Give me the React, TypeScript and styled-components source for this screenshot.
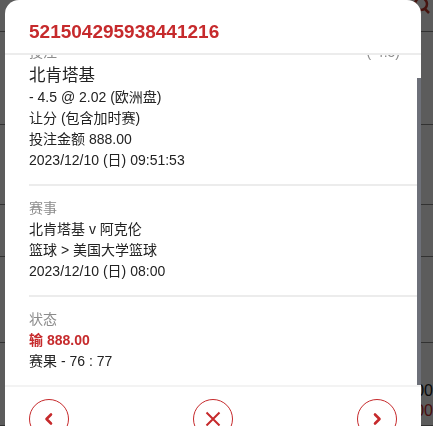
import React, { useLayoutEffect, useRef, useState } from 'react';
import styled, { createGlobalStyle } from 'styled-components';

const colors = {
  red: '#c62a2c',
  text: '#222222',
  label: '#8c8c8c',
  line: '#ececec',
  thumb: '#6d7079',
};

const GlobalStyle = createGlobalStyle`
  html, body {
    margin: 0;
    padding: 0;
    height: 100%;
    overflow: hidden;
    font-family: "Liberation Sans", Arial, "Noto Sans CJK SC", sans-serif;
  }
`;

/* page behind the dialog */
const Page = styled.div`
  width: 433px;
  height: 426px;
  background: #ffffff;
  display: flex;
  flex-direction: column;
`;

const PageBar = styled.div`
  height: 32px;
  display: flex;
  justify-content: flex-end;
  align-items: flex-start;
  padding-right: 2px;
  border-bottom: 1px solid #8a8a8a;
  box-sizing: border-box;
`;

const PageRow = styled.div<{ $h: number }>`
  height: ${({ $h }) => $h}px;
  border-bottom: 1px solid #8a8a8a;
  box-sizing: border-box;
  display: flex;
  flex-direction: column;
  align-items: flex-end;
  justify-content: flex-end;
  padding: 0 0 4px;
  font-size: 16px;
  line-height: 20px;
`;

const PageNum = styled.span<{ $red?: boolean }>`
  color: ${({ $red }) => ($red ? '#c62a2c' : '#222')};
`;

const Overlay = styled.div`
  position: fixed;
  inset: 0;
  background: rgba(0, 0, 0, 0.64);
  display: flex;
  align-items: flex-start;
  padding-left: 5px;
`;

const Modal = styled.div`
  width: 416px;
  background: #ffffff;
  border-radius: 14px 14px 0 0;
  display: flex;
  flex-direction: column;
  overflow: hidden;
  flex-shrink: 0;
  & > * {
    flex-shrink: 0;
  }
`;

const Header = styled.div`
  height: 55px;
  display: flex;
  align-items: center;
  padding: 10px 24px 0;
  box-sizing: border-box;
  border-bottom: 2px solid ${colors.line};
`;

const Title = styled.h2`
  margin: 0;
  font-size: 19px;
  font-weight: 700;
  color: ${colors.red};
`;

const BodyWrap = styled.div`
  position: relative;
  height: 330px;
`;

const Body = styled.div`
  height: 100%;
  overflow-y: auto;
  scrollbar-width: none;
  &::-webkit-scrollbar {
    display: none;
  }
`;

const Thumb = styled.div`
  position: absolute;
  right: 0;
  width: 4px;
  background: ${colors.thumb};
`;

const Section = styled.section<{ $last?: boolean }>`
  margin-left: 24px;
  padding: 12px 21px 13px 0;
  border-bottom: ${({ $last }) => ($last ? 'none' : `2px solid ${colors.line}`)};
  display: flex;
  flex-direction: column;
`;

const LabelRow = styled.div`
  display: flex;
  justify-content: space-between;
  height: 21px;
`;

const Label = styled.span`
  display: block;
  height: 21px;
  font-size: 14px;
  line-height: 21px;
  color: ${colors.label};
`;

const Team = styled.div`
  height: 24px;
  font-size: 16.5px;
  line-height: 24px;
  color: ${colors.text};
`;

const Line = styled.div<{ $red?: boolean }>`
  height: 21px;
  font-size: 14px;
  line-height: 21px;
  color: ${({ $red }) => ($red ? colors.red : colors.text)};
  font-weight: ${({ $red }) => ($red ? 700 : 400)};
`;

const Footer = styled.div`
  border-top: 2px solid #f3f3f3;
  padding: 12px 24px;
  display: flex;
  justify-content: space-between;
`;

const RoundButton = styled.button`
  width: 40px;
  height: 40px;
  border-radius: 50%;
  border: 1px solid ${colors.red};
  background: #ffffff;
  padding: 0;
  display: flex;
  align-items: center;
  justify-content: center;
  color: ${colors.red};
  cursor: pointer;
`;

const SearchIcon = () => (
  <svg width="18" height="18" viewBox="0 0 18 18">
    <circle cx="8" cy="4" r="6" fill="none" stroke="#c0392b" strokeWidth="2.5" />
    <line x1="12" y1="9" x2="16" y2="13" stroke="#c0392b" strokeWidth="2.5" />
  </svg>
);

const Chevron = ({ dir }: { dir: 'left' | 'right' }) => (
  <svg width="12" height="14" viewBox="0 0 12 14">
    <path
      d={dir === 'left' ? 'M8 2.5 L3.5 7 L8 11.5' : 'M4 2.5 L8.5 7 L4 11.5'}
      fill="none"
      stroke="currentColor"
      strokeWidth="2.6"
      strokeLinecap="round"
      strokeLinejoin="round"
    />
  </svg>
);

const Cross = () => (
  <svg width="18" height="18" viewBox="0 0 18 18">
    <path d="M2.5 2.5 L15.5 15.5 M15.5 2.5 L2.5 15.5" stroke="currentColor" strokeWidth="2" />
  </svg>
);

const App = () => {
  const bodyRef = useRef<HTMLDivElement>(null);
  const [thumb, setThumb] = useState({ top: 0, height: 0 });

  useLayoutEffect(() => {
    const el = bodyRef.current;
    if (!el) return;
    el.scrollTop = el.scrollHeight;
    const ratio = el.clientHeight / el.scrollHeight;
    setThumb({ top: el.scrollTop * ratio, height: el.clientHeight * ratio });
  }, []);

  return (
    <>
      <GlobalStyle />
      <Page>
        <PageBar>
          <SearchIcon />
        </PageBar>
        <PageRow $h={93} />
        <PageRow $h={80} />
        <PageRow $h={52} />
        <PageRow $h={86} />
        <PageRow $h={83}>
          <PageNum>00</PageNum>
          <PageNum $red>00</PageNum>
        </PageRow>
      </Page>
      <Overlay>
        <Modal>
          <Header>
            <Title>521504295938441216</Title>
          </Header>
          <BodyWrap>
            <Body ref={bodyRef}>
              <Section>
                <LabelRow>
                  <Label>投注</Label>
                  <Label>(-4.5)</Label>
                </LabelRow>
                <Team>北肯塔基</Team>
                <Line>- 4.5 @ 2.02 (欧洲盘)</Line>
                <Line>让分 (包含加时赛)</Line>
                <Line>投注金额 888.00</Line>
                <Line>2023/12/10 (日) 09:51:53</Line>
              </Section>
              <Section>
                <Label>赛事</Label>
                <Line>北肯塔基 v 阿克伦</Line>
                <Line>篮球 &gt; 美国大学篮球</Line>
                <Line>2023/12/10 (日) 08:00</Line>
              </Section>
              <Section $last>
                <Label>状态</Label>
                <Line $red>输 888.00</Line>
                <Line>赛果 - 76 : 77</Line>
              </Section>
            </Body>
            <Thumb style={{ top: thumb.top, height: thumb.height }} />
          </BodyWrap>
          <Footer>
            <RoundButton aria-label="previous">
              <Chevron dir="left" />
            </RoundButton>
            <RoundButton aria-label="close">
              <Cross />
            </RoundButton>
            <RoundButton aria-label="next">
              <Chevron dir="right" />
            </RoundButton>
          </Footer>
        </Modal>
      </Overlay>
    </>
  );
};

export default App;
